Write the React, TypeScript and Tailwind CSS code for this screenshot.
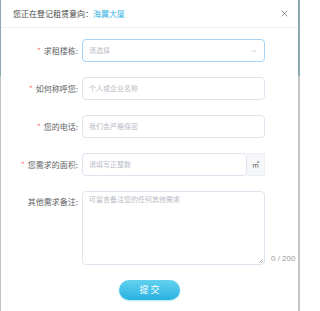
import React, { ReactElement } from 'react';

const font = { fontFamily: '"Noto Sans CJK SC", "Liberation Sans", sans-serif' };

const Label = ({ text, required }: { text: string; required?: boolean }): ReactElement => (
  <div className="flex h-[23px] w-[81px] shrink-0 items-center justify-end pr-[4px] text-[8px] text-[#606266]">
    {required && <span className="mr-[3px] text-[8px] text-[#f56c6c]">*</span>}
    <span>{text}</span>
  </div>
);

const Field = ({ placeholder }: { placeholder: string }): ReactElement => (
  <div className="flex h-[23px] w-[183px] items-center rounded-[4px] border border-[#dfe3ee] bg-white pl-[6px] text-[7px] text-[#b8bcc6]">
    {placeholder}
  </div>
);

const App = (): ReactElement => {
  return (
    <div className="flex h-[311px] w-[300px] overflow-hidden bg-[#bdbdbd]" style={font}>
      <div className="flex w-px shrink-0 flex-col">
        <div className="h-[76px] bg-[#8aa9b1]" />
        <div className="flex-1 bg-[#c4c4c4]" />
      </div>
      <div className="flex w-[297px] shrink-0 flex-col bg-white">
        <div className="flex h-[28px] items-center justify-between border-b border-[#eef0f3] pl-[12px] pr-[10px]">
          <span className="text-[8px] text-[#444]">
            您正在登记租赁意向：<span className="text-[#35b4e3]">海翼大厦</span>
          </span>
          <svg width="7" height="7" viewBox="0 0 10 10" className="text-[#888]">
            <path d="M1 1L9 9M9 1L1 9" stroke="currentColor" strokeWidth="1.2" />
          </svg>
        </div>

        <div className="flex flex-col gap-[15px] pt-[11px]">
          <div className="flex">
            <Label text="求租楼栋:" required />
            <div className="flex h-[23px] w-[183px] items-center justify-between rounded-[4px] border border-[#a9d3f2] bg-white pl-[6px] pr-[7px] text-[7px] text-[#b8bcc6]">
              <span>请选择</span>
              <svg width="6" height="4" viewBox="0 0 8 5">
                <path d="M1 1L4 4L7 1" fill="none" stroke="#c0c4cc" strokeWidth="1" />
              </svg>
            </div>
          </div>
          <div className="flex">
            <Label text="如何称呼您:" required />
            <Field placeholder="个人或企业名称" />
          </div>
          <div className="flex">
            <Label text="您的电话:" required />
            <Field placeholder="我们会严格保密" />
          </div>
          <div className="flex">
            <Label text="您需求的面积:" required />
            <div className="flex h-[23px] w-[165px] items-center rounded-[4px] border border-[#dfe3ee] bg-white pl-[6px] text-[7px] text-[#b8bcc6]">
              请填写正整数
            </div>
            <div className="flex h-[23px] w-[18px] items-center justify-center border-y border-r border-[#eceef2] bg-[#f5f6f8] text-[7px] text-[#555]">
              ㎡
            </div>
          </div>
          <div className="flex">
            <div className="flex w-[81px] shrink-0 justify-end pr-[4px] pt-[5px] text-[8px] text-[#606266]">其他需求备注:</div>
            <div className="relative h-[74px] w-[183px] rounded-[4px] border border-[#dfe3ee] bg-white px-[6px] pt-[2px] text-[7px] text-[#b8bcc6]">
              可留言备注您的任何其他需求
              <svg width="4" height="4" viewBox="0 0 4 4" className="absolute bottom-[1px] right-[1px]">
                <path d="M0 4L4 0M2 4L4 2" stroke="#999" strokeWidth="0.6" />
              </svg>
            </div>
            <div className="flex items-end pl-[6px] text-[8px] leading-[12px] text-[#999]" style={{ fontFamily: '"Liberation Sans", sans-serif' }}>0 / 200</div>
          </div>
        </div>

        <div className="flex justify-center pt-[15px]">
          <button className="flex h-[20px] w-[61px] items-center justify-center rounded-full bg-gradient-to-b from-[#62d2f0] to-[#23b1e0] text-[9px] text-white shadow-[0_1px_2px_rgba(35,177,224,0.35)]">
            提&nbsp;交
          </button>
        </div>
      </div>
      <div className="flex w-[2px] shrink-0 flex-col">
        <div className="h-[76px] bg-[#8aa9b1]" />
        <div className="flex-1 bg-[#c4c4c4]" />
      </div>
    </div>
  );
};

export default App;
